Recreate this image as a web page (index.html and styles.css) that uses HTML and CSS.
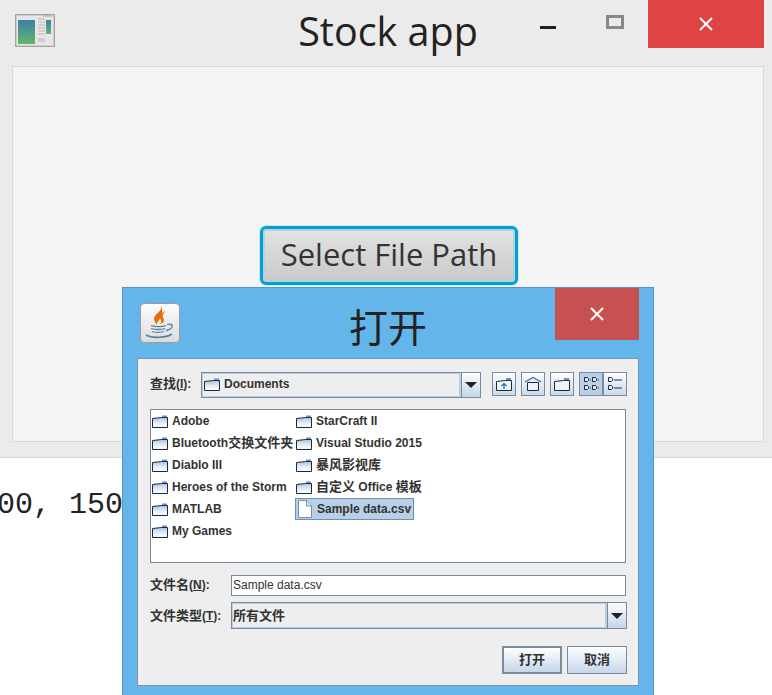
FILE: index.html
```html
<!DOCTYPE html>
<html lang="zh">
<head>
<meta charset="utf-8">
<title>Stock app</title>
<link rel="stylesheet" href="styles.css">
</head>
<body>
<svg class="defs" width="0" height="0" aria-hidden="true">
  <defs>
    <linearGradient id="fg" x1="0" y1="0" x2="0" y2="1">
      <stop offset="0" stop-color="#a9c3e2"/>
      <stop offset="0.55" stop-color="#e4edf6"/>
      <stop offset="1" stop-color="#ffffff"/>
    </linearGradient>
    <linearGradient id="scr" x1="0" y1="0" x2="0" y2="1">
      <stop offset="0" stop-color="#3f7fa8"/>
      <stop offset="1" stop-color="#63b56c"/>
    </linearGradient>
    <linearGradient id="jbg" x1="0" y1="0" x2="0" y2="1">
      <stop offset="0" stop-color="#fdfdfd"/>
      <stop offset="1" stop-color="#dcdcdc"/>
    </linearGradient>
    <symbol id="folder" viewBox="0 0 16 14">
      <path d="M10 1.500h5v2h-5z" fill="#6d8fc9"/>
      <path d="M.5 4.500 L9.500 3.500 L15.500 3.500 V13.500 H.5 Z" fill="url(#fg)" stroke="#1c2a3a"/>
    </symbol>
  </defs>
</svg>
<div class="screen">
  <section class="main-window">
    <header class="titlebar">
      <svg class="app-icon" width="40" height="33" viewBox="0 0 40 33">
        <rect x=".5" y=".5" width="39" height="32" fill="#e6e6e6" stroke="#a3a3a3"/>
        <rect x="1.500" y="1.500" width="37" height="30" fill="none" stroke="#cfcfcf"/>
        <rect x="3" y="6" width="17" height="24" fill="url(#scr)"/>
        <path d="M23 5h7M23 8h7M23 11h7M23 14h7M23 17h7M23 20h7" stroke="#bdbdbd"/>
        <rect x="31" y="6" width="5" height="14" fill="url(#scr)"/>
        <rect x="23" y="24" width="7" height="4" fill="#cdcdcd"/>
        <path d="M28 2h9" stroke="#aaa"/>
      </svg>
      <h1 class="app-title">Stock app</h1>
      <div class="win-controls">
        <span class="win-min"></span>
        <span class="win-max"></span>
        <span class="win-close">
          <svg width="14" height="14" viewBox="0 0 14 14"><path d="M1 1 13 13M13 1 1 13" stroke="#fff" stroke-width="2"/></svg>
        </span>
      </div>
    </header>
    <div class="panel">
      <button class="fx-button">Select File Path</button>
    </div>
  </section>
  <div class="output">100, 150</div>
</div>

<div class="dialog">
  <header class="dlg-title">
    <svg class="java-icon" width="40" height="40" viewBox="0 0 40 40">
      <rect x=".5" y=".5" width="39" height="39" rx="4" fill="url(#jbg)" stroke="#9c9c9c"/>
      <path d="M21 3C23 8 14 11 14 16 14 18 16 20 17 22 16 18 24 14 22 8 22 6 22 4 21 3Z" fill="#e76f00"/>
      <path d="M26 8C21 10 19 13 20 15 21 17 22 19 20 21 24 20 25 17 23 15 22 13 23 10 26 8Z" fill="#e76f00"/>
      <path d="M11 22.500c4 1.500 12 1.500 15 0M11 25.500c4 1.300 11 1.300 14 0M12 28.500c3 1 9 1 12 0" fill="none" stroke="#5382a1" stroke-width="1.300"/>
      <path d="M27 21.500c3-1 6 0 5 2.500-.8 2-4 3-6 3.500" fill="none" stroke="#5382a1" stroke-width="1.300"/>
      <path d="M6 32c6 3.500 20 3 26-1" fill="none" stroke="#5382a1" stroke-width="1.600"/>
    </svg>
    <h2 class="dlg-heading">打开</h2>
    <span class="dlg-close">
      <svg width="14" height="14" viewBox="0 0 14 14"><path d="M1 1 13 13M13 1 1 13" stroke="#fff" stroke-width="2"/></svg>
    </span>
  </header>
  <div class="dlg-body">
    <div class="look-row">
      <label class="lbl look-lbl"><span class="cjk">查找</span>(<u>I</u>):</label>
      <div class="combo look-combo">
        <span class="combo-value look-value"><svg class="fi"><use href="#folder"/></svg>Documents</span>
        <span class="combo-arrow"><i class="tri"></i></span>
      </div>
      <div class="tools">
        <span class="tool">
          <svg width="18" height="16" viewBox="0 0 18 16"><path d="M11 2h5v2h-5z" fill="#6d8fc9"/><path d="M1.500 5.500 10.500 4.500H16.500V14.500H1.500Z" fill="#eef3f9" stroke="#1c2a3a"/><path d="M9 13V8M6.500 10 9 7.500 11.500 10" fill="none" stroke="#2a6cb0" stroke-width="1.200"/></svg>
        </span>
        <span class="tool">
          <svg width="18" height="16" viewBox="0 0 18 16"><path d="M1 6 9 1.500 17 6" fill="none" stroke="#2a6cb0" stroke-width="1.200"/><path d="M3.500 6.500H14.500V14.500H3.500Z" fill="#eef3f9" stroke="#1c2a3a"/></svg>
        </span>
        <span class="tool">
          <svg width="18" height="16" viewBox="0 0 18 16"><path d="M11 2h5v2h-5z" fill="#6d8fc9"/><path d="M1.500 5.500 10.500 4.500H16.500V14.500H1.500Z" fill="#eef3f9" stroke="#1c2a3a"/></svg>
        </span>
        <span class="view-group">
          <span class="tool tool-on">
            <svg width="16" height="14" viewBox="0 0 16 14"><path d="M1.500 .5h3l1 1v2l-1 1h-3zM9.500 .5h3l1 1v2l-1 1h-3zM1.500 8.500h3l1 1v2l-1 1h-3zM9.500 8.500h3l1 1v2l-1 1h-3z" fill="#dfe8f2" stroke="#1c2a3a"/><path d="M7 3h1M15 3h1M7 11h1M15 11h1" stroke="#1c2a3a"/></svg>
          </span>
          <span class="tool">
            <svg width="16" height="14" viewBox="0 0 16 14"><path d="M1.500 .5h3l1 1v2l-1 1h-3zM1.500 8.500h3l1 1v2l-1 1h-3z" fill="#eef3f9" stroke="#1c2a3a"/><path d="M7 3h8M7 11h8" stroke="#1c2a3a"/></svg>
          </span>
        </span>
      </div>
    </div>

    <div class="file-list">
      <div class="file-col col-one">
        <div class="file"><svg class="fi"><use href="#folder"/></svg>Adobe</div>
        <div class="file"><svg class="fi"><use href="#folder"/></svg><span class="tight">Bluetooth <span class="cjk">交换文件夹</span></span></div>
        <div class="file"><svg class="fi"><use href="#folder"/></svg>Diablo III</div>
        <div class="file"><svg class="fi"><use href="#folder"/></svg>Heroes of the Storm</div>
        <div class="file"><svg class="fi"><use href="#folder"/></svg>MATLAB</div>
        <div class="file"><svg class="fi"><use href="#folder"/></svg>My Games</div>
      </div>
      <div class="file-col">
        <div class="file"><svg class="fi"><use href="#folder"/></svg>StarCraft II</div>
        <div class="file"><svg class="fi"><use href="#folder"/></svg>Visual Studio 2015</div>
        <div class="file"><svg class="fi"><use href="#folder"/></svg><span class="cjk">暴风影视库</span></div>
        <div class="file"><svg class="fi"><use href="#folder"/></svg><span class="cjk">自定义</span>&nbsp;Office&nbsp;<span class="cjk">模板</span></div>
        <div class="file file-sel">
          <svg class="fi-doc" width="16" height="18" viewBox="0 0 16 18"><path d="M1.500 .5H9.500L14.500 6V17.500H1.500Z" fill="#fff" stroke="#6f8fb5"/><path d="M9.500 .5V6H14.500" fill="#dbe6f2" stroke="#6f8fb5"/></svg>Sample data.csv
        </div>
      </div>
    </div>

    <div class="form-row name-row">
      <label class="lbl form-lbl"><span class="cjk">文件名</span>(<u>N</u>):</label>
      <input class="name-input" value="Sample data.csv">
    </div>
    <div class="form-row type-row">
      <label class="lbl form-lbl"><span class="cjk">文件类型</span>(<u>T</u>):</label>
      <div class="combo type-combo">
        <span class="combo-value type-value cjk">所有文件</span>
        <span class="combo-arrow"><i class="tri"></i></span>
      </div>
    </div>
    <div class="actions">
      <button class="dlg-btn dlg-default">打开</button>
      <button class="dlg-btn">取消</button>
    </div>
  </div>
</div>
</body>
</html>
```
FILE: styles.css
```css
* { box-sizing: border-box; }
html, body { margin: 0; padding: 0; height: 100%; overflow: hidden; background: #fff; }
.defs { position: absolute; }
.screen { display: flex; flex-direction: column; height: 695px; }

.main-window { height: 458px; background: #ebebeb; border-bottom: 1px solid #d8d8d8; flex: none; }
.titlebar { position: relative; height: 66px; display: flex; align-items: flex-start; padding: 14px 0 0 15px; }
.app-icon { flex: none; }
.app-title {
  position: absolute; left: 0; right: 0; top: 6px; margin: 0; text-align: center; padding-left: 4px;
  font: 400 39.5px/50px "Open Sans", "Noto Sans", sans-serif; color: #222;
}
.win-controls { position: absolute; right: 8px; top: 0; display: flex; align-items: flex-start; }
.win-min { width: 16px; height: 3px; background: #222; margin: 26px 0 0 0; }
.win-max { width: 18px; height: 14px; border: 3px solid #888; margin: 15px 0 0 50px; }
.win-close { width: 116px; height: 48px; background: #e04343; margin-left: 24px; display: flex; align-items: center; justify-content: center; }

.panel {
  margin: 0 8px 0 12px; height: 376px; background: #f4f4f4; border: 1px solid #d9d9d9;
  padding: 159px 0 0 2px; display: flex; justify-content: center; align-items: flex-start;
}
.fx-button {
  width: 258px; height: 59px; padding: 0 0 2px 0; border-radius: 6px;
  border: 3px solid #00a2d6; box-shadow: 0 0 0 1px #cfe8f2, inset 0 0 0 2px #b7d2dd;
  background: linear-gradient(#e3e3e3, #c9c9c9);
  font: 400 31px/1 "Open Sans", "Noto Sans", sans-serif; color: #333;
}

.output {
  margin-left: -21px; padding-top: 29px; white-space: nowrap;
  font: 400 30px/36px "Liberation Mono", monospace; color: #222;
}

.dialog {
  position: absolute; left: 122px; top: 287px; width: 532px; height: 420px;
  background: #64b5ea; border: 1px solid #5a93bd;
}
.dlg-title { position: relative; height: 70px; padding: 15px 0 0 17px; }
.java-icon { display: block; }
.dlg-heading {
  position: absolute; left: 0; right: 0; top: 8px; margin: 0; text-align: center;
  font: 400 39px/58px "Noto Sans CJK SC", sans-serif; color: #222;
}
.dlg-close { position: absolute; right: 14px; top: 0; width: 84px; height: 52px; background: #c75050; display: flex; align-items: center; justify-content: center; }

.dlg-body {
  margin: 0 14px 0 14px; height: 328px; background: #eeeeee; border: 1px solid #7596b4;
  padding: 13px 12px 0 12px; display: flex; flex-direction: column;
}
.cjk { font-size: 13px; }
.tight { word-spacing: -3px; }
.lbl { font: 700 12px/16px "Liberation Sans", "Noto Sans CJK SC", sans-serif; color: #333; white-space: nowrap; }
.lbl u { text-decoration: underline; }

.look-row { display: flex; align-items: center; height: 26px; }
.look-lbl { width: 51px; flex: none; padding-bottom: 2px; }
.combo { display: flex; border: 1px solid #7a8a9f; background: #eeeeee; flex: none; }
.look-combo { width: 280px; height: 26px; }
.type-combo { width: 396px; height: 27px; }
.combo-value {
  flex: 1; display: flex; align-items: center; padding-left: 1px; border: 2px solid #b8cfe5; border-width: 1px 2px 1px 1px;
  font: 700 12px/16px "Liberation Sans", "Noto Sans CJK SC", sans-serif; color: #333;
}
.look-value { padding-bottom: 2px; }
.type-value { font-size: 13px; padding-left: 0; }
.combo-arrow {
  width: 19px; border-left: 1px solid #7a8a9f; background: linear-gradient(#fdfeff, #c3d5e8);
  display: flex; align-items: center; justify-content: center; flex: none;
}
.tri { width: 0; height: 0; border: 6px solid transparent; border-top: 6px solid #222; border-bottom: 0; }
.tools { display: flex; margin-left: 11px; gap: 5px; align-items: flex-start; height: 26px; }
.view-group { display: flex; }
.tool {
  width: 24px; height: 24px; border: 1px solid #7a8a9f; background: linear-gradient(#fdfeff, #c9d9ea);
  display: flex; align-items: center; justify-content: center;
}
.tool-on { background: #b8cfe5; }

.fi { width: 16px; height: 14px; margin-right: 4px; flex: none; }
.fi-doc { margin-right: 4px; flex: none; }

.file-list {
  margin-top: 11px; height: 154px; background: #fff; border: 1px solid #7a8a9f;
  display: flex; padding: 0 0 0 1px;
}
.file-col { display: flex; flex-direction: column; }
.col-one { width: 144px; }
.file {
  height: 22px; display: flex; align-items: center; white-space: nowrap;
  font: 700 12px/16px "Liberation Sans", "Noto Sans CJK SC", sans-serif; color: #333;
}
.file-sel { background: #b8cfe5; border: 1px solid #6a8fb8; width: 119px; margin-left: -1px; padding-left: 1px; }

.form-row { display: flex; align-items: center; }
.name-row { margin-top: 11px; height: 22px; }
.type-row { margin-top: 6px; height: 27px; }
.form-lbl { width: 81px; flex: none; }
.name-input {
  width: 395px; height: 21px; border: 1px solid #7a8a9f; background: #fff; padding: 0 1px;
  font: 400 12px "Liberation Sans", sans-serif; color: #333; outline: 0;
}
.actions { display: flex; justify-content: flex-end; gap: 5px; margin: 17px -1px 0 0; }
.dlg-btn {
  width: 60px; height: 28px; padding: 0; border: 1px solid #7a8a9f; background: linear-gradient(#fdfeff, #c5d7ea);
  font: 700 13px/16px "Liberation Sans", "Noto Sans CJK SC", sans-serif; color: #333;
}
.dlg-default { border: 2px solid #7a8a9f; }
```
